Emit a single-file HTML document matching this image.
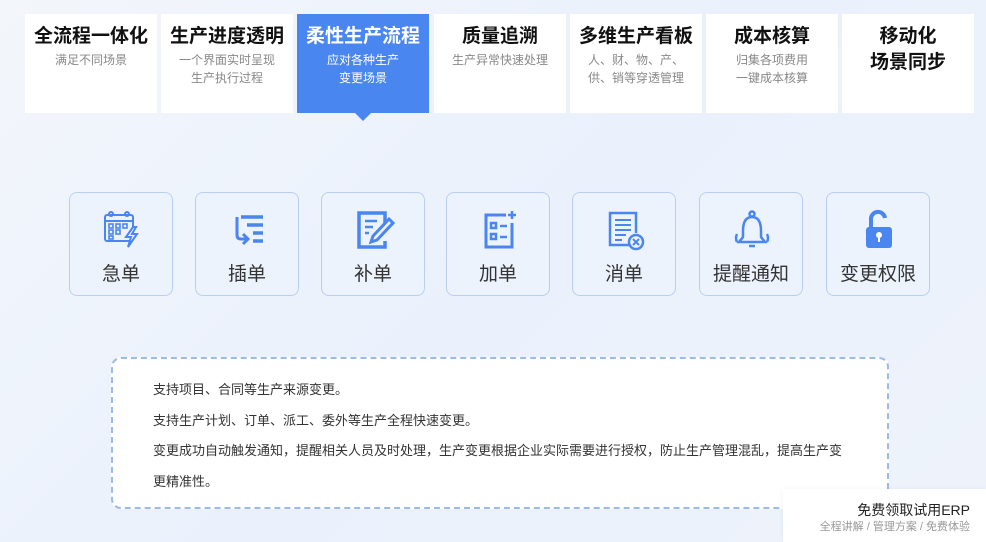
<!DOCTYPE html>
<html><head><meta charset="utf-8"><style>
*{margin:0;padding:0;box-sizing:border-box}
body{width:986px;height:542px;overflow:hidden;background:linear-gradient(135deg,#f3f6fb 0%,#eaf1fc 50%,#eef3fb 100%);font-family:"Liberation Sans","Noto Sans CJK SC",sans-serif;position:relative}
.tab{position:absolute;top:14px;width:132px;height:99px;background:#fff;text-align:center}
.tab h3{font-size:19px;font-weight:700;color:#111;margin-top:10px;line-height:26px}
.tab p{font-size:12px;color:#888;line-height:18px;margin-top:1px}
.tab.on{background:#4a86f0}
.tab.on h3,.tab.on p{color:#fff}
.tab.on:after{content:"";position:absolute;left:58px;bottom:-8px;border:8px solid transparent;border-top-color:#4a86f0;border-bottom:0}
.card{position:absolute;top:192px;width:104px;height:104px;border:1px solid #b9cff2;border-radius:8px;background:#edf3fd;text-align:center}
.card svg{position:absolute;left:31px;top:16px;width:42px;height:42px}
.card span{position:absolute;left:0;right:0;top:66px;font-size:19px;color:#333}
.box{position:absolute;left:111px;top:357px;width:778px;height:152px;border:2px dashed #9dbbea;border-radius:10px;background:#fff;padding:16px 0 16px 40px;font-size:13px;color:#333;line-height:30.5px;white-space:nowrap}
.w{position:absolute;left:783px;top:489px;width:203px;height:53px;background:#fff;text-align:right;padding-right:16px;padding-top:12px;box-shadow:0 0 6px rgba(0,0,0,.05)}
.w b{display:block;font-weight:400;font-size:14px;color:#222;line-height:18px}
.w i{display:block;font-style:normal;font-size:11px;color:#999;line-height:16px}
</style></head><body>
<div class="tab" style="left:25px"><h3>全流程一体化</h3><p>满足不同场景</p></div>
<div class="tab" style="left:161px"><h3>生产进度透明</h3><p>一个界面实时呈现<br>生产执行过程</p></div>
<div class="tab on" style="left:297px"><h3>柔性生产流程</h3><p>应对各种生产<br>变更场景</p></div>
<div class="tab" style="left:434px"><h3>质量追溯</h3><p>生产异常快速处理</p></div>
<div class="tab" style="left:570px"><h3>多维生产看板</h3><p>人、财、物、产、<br>供、销等穿透管理</p></div>
<div class="tab" style="left:706px"><h3>成本核算</h3><p>归集各项费用<br>一键成本核算</p></div>
<div class="tab" style="left:842px"><h3 style="margin-top:10px">移动化<br>场景同步</h3></div>

<div class="card" style="left:69px"><svg viewBox="0 0 42 42" fill="none" stroke="#4a86f0" stroke-width="2"><rect x="4" y="6" width="28" height="26" rx="2"/><line x1="4" y1="12" x2="32" y2="12"/><circle cx="10" cy="5" r="2"/><circle cx="26" cy="5" r="2"/><g stroke-width="1.6"><rect x="8" y="15" width="4" height="4"/><rect x="15" y="15" width="4" height="4"/><rect x="22" y="15" width="4" height="4"/><rect x="8" y="21" width="4" height="4"/><rect x="15" y="21" width="4" height="4"/><rect x="8" y="27" width="4" height="3"/></g><path d="M32 18 L25 28 L30 28 L27 38 L36 25 L31 25 L35 18Z" fill="#edf3fd"/></svg><span>急单</span></div>
<div class="card" style="left:195px"><svg viewBox="0 0 42 42" fill="none" stroke="#4a86f0" stroke-width="3.5"><path d="M14 8H36M20 16H36M26 24H36M26 32H36"/><path d="M10 8V26Q10 30 14 30H20M16 25L21 30L16 35" stroke-width="3"/></svg><span>插单</span></div>
<div class="card" style="left:321px"><svg viewBox="0 0 42 42" fill="none" stroke="#4a86f0" stroke-width="3.5"><path d="M32 14V4H6V38H32V32"/><path d="M12 12H24M12 18H20M12 24H16" stroke-width="2.5"/><path d="M36 10L40 14L24 31L18 33L20 27Z" stroke-width="3"/></svg><span>补单</span></div>
<div class="card" style="left:446px"><svg viewBox="0 0 42 42" fill="none" stroke="#4a86f0" stroke-width="3"><path d="M28 6H8V38H34V14"/><rect x="13" y="14" width="5" height="5" stroke-width="2.5"/><rect x="13" y="25" width="5" height="5" stroke-width="2.5"/><path d="M22 17H29M22 28H29M34 2V10M30 6H38" stroke-width="2.5"/></svg><span>加单</span></div>
<div class="card" style="left:572px"><svg viewBox="0 0 42 42" fill="none" stroke="#4a86f0" stroke-width="2.5"><path d="M26 36H6V4H32V24"/><path d="M11 11H27M11 16H27M11 21H27M11 26H22M11 31H18" stroke-width="2"/><circle cx="32" cy="33" r="7"/><path d="M29 30L35 36M35 30L29 36" stroke-width="2"/></svg><span>消单</span></div>
<div class="card" style="left:699px"><svg viewBox="0 0 42 42" fill="none" stroke="#4a86f0" stroke-width="2.5"><circle cx="21" cy="5" r="2.5"/><path d="M21 8C13 8 12 16 12 22V28L8 33H34L30 28V22C30 16 29 8 21 8Z"/><path d="M18 37H24M6 25Q4 29 6 33M36 25Q38 29 36 33"/></svg><span>提醒通知</span></div>
<div class="card" style="left:826px"><svg viewBox="0 0 42 42"><path d="M13 18V11A7 7 0 0 1 27 9" fill="none" stroke="#4a86f0" stroke-width="4"/><rect x="8" y="18" width="26" height="21" rx="3" fill="#4a86f0"/><circle cx="21" cy="26" r="3" fill="#fff"/><rect x="20" y="27" width="2" height="6" fill="#fff"/></svg><span>变更权限</span></div>

<div class="box">支持项目、合同等生产来源变更。<br>支持生产计划、订单、派工、委外等生产全程快速变更。<br>变更成功自动触发通知，提醒相关人员及时处理，生产变更根据企业实际需要进行授权，防止生产管理混乱，提高生产变<br>更精准性。</div>
<div class="w"><b>免费领取试用ERP</b><i>全程讲解 / 管理方案 / 免费体验</i></div>
</body></html>
